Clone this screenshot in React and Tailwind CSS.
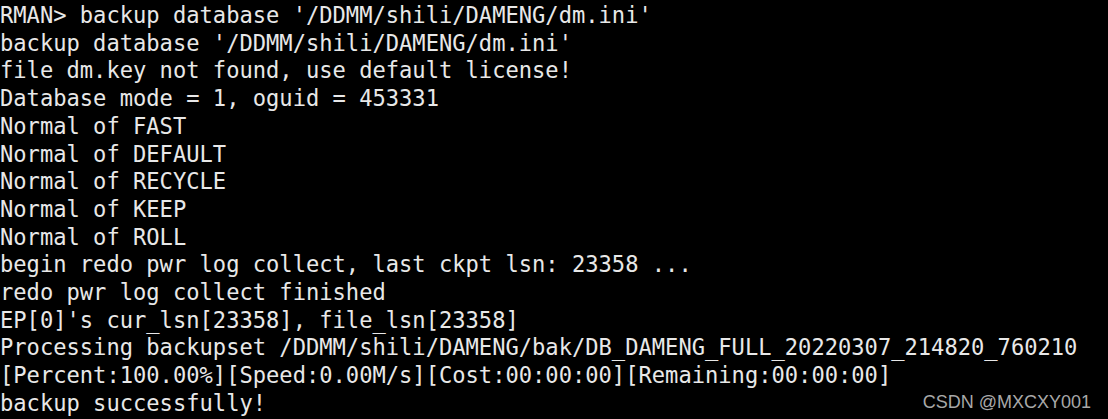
const lines = [
  "RMAN> backup database '/DDMM/shili/DAMENG/dm.ini'",
  "backup database '/DDMM/shili/DAMENG/dm.ini'",
  "file dm.key not found, use default license!",
  "Database mode = 1, oguid = 453331",
  "Normal of FAST",
  "Normal of DEFAULT",
  "Normal of RECYCLE",
  "Normal of KEEP",
  "Normal of ROLL",
  "begin redo pwr log collect, last ckpt lsn: 23358 ...",
  "redo pwr log collect finished",
  "EP[0]'s cur_lsn[23358], file_lsn[23358]",
  "Processing backupset /DDMM/shili/DAMENG/bak/DB_DAMENG_FULL_20220307_214820_760210",
  "[Percent:100.00%][Speed:0.00M/s][Cost:00:00:00][Remaining:00:00:00]",
  "backup successfully!",
];

export default function App() {
  return (
    <div className="relative w-[1108px] h-[419px] bg-black overflow-hidden">
      <div className="flex flex-col pt-[2px] font-['DejaVu_Sans_Mono',monospace] text-[22.1px] leading-[27.7px] text-[#e8e8e8] whitespace-pre">
        {lines.map((l, i) => (
          <div key={i}>{l}</div>
        ))}
      </div>
      <div className="absolute right-[17px] bottom-[8px] font-['Liberation_Sans',Arial,sans-serif] text-[18px] leading-[18px] text-[#a8a8a8]">
        CSDN @MXCXY001
      </div>
    </div>
  );
}
